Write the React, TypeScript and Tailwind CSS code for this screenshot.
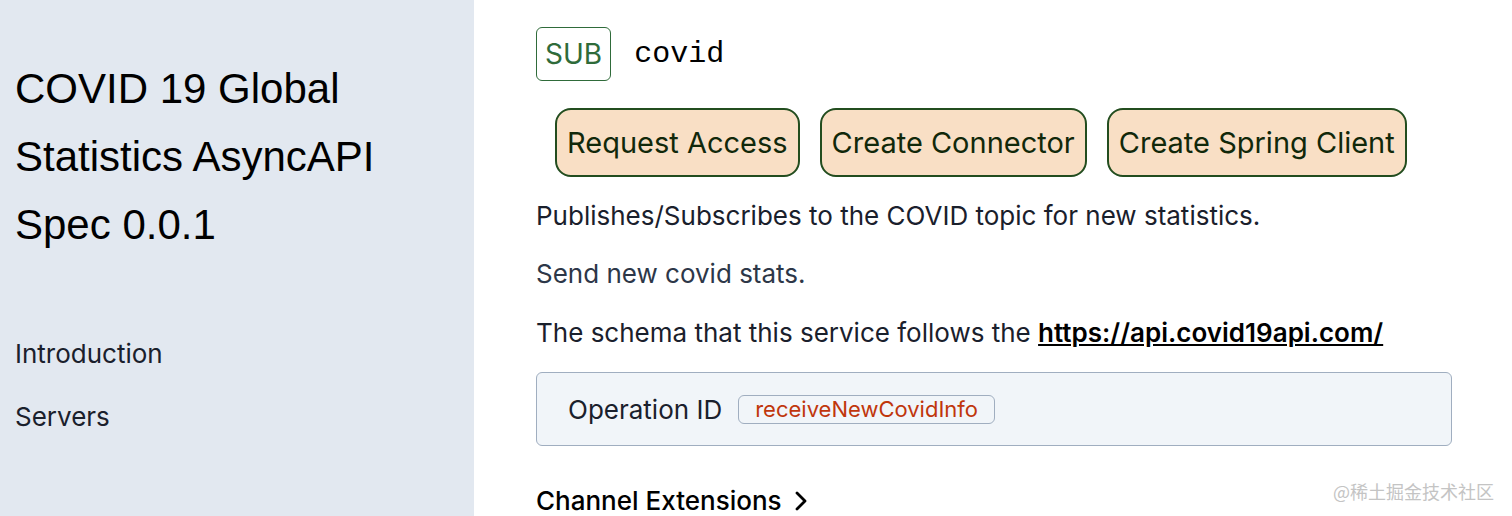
export default function App() {
  const sans = { fontFamily: "Inter, 'Noto Sans', sans-serif" };
  return (
    <div className="flex w-[1512px] h-[516px] overflow-hidden bg-white relative" style={sans}>
      <aside className="w-[474px] shrink-0 bg-[#e2e8f0] pl-[15px] pt-[55px]">
        <h1 className="text-[42px] leading-[68px] text-black" style={{ fontFamily: "'Liberation Sans', Arial, sans-serif" }}>
          COVID 19 Global Statistics AsyncAPI Spec 0.0.1
        </h1>
        <nav className="mt-[80px] space-y-[33px] text-[26px] leading-[30px] text-[#1a202c]">
          <div>Introduction</div>
          <div>Servers</div>
        </nav>
      </aside>

      <main className="flex-1 pl-[62px] pr-[60px] pt-[27px]">
        <div className="flex items-center gap-[23px]">
          <span className="h-[54px] px-[8px] flex items-center border border-[#2f6b3a] rounded-[6px] text-[#2f6b3a] text-[28px]">
            SUB
          </span>
          <span className="text-[30px] text-black" style={{ fontFamily: "'Liberation Mono', monospace" }}>covid</span>
        </div>

        <div className="flex gap-[20px] ml-[19px] mt-[27px]">
          {["Request Access", "Create Connector", "Create Spring Client"].map((label) => (
            <button
              key={label}
              className="h-[69px] px-[10px] rounded-[16px] border-2 border-[#234d1f] bg-[#f9dfc5] text-[#11280a] text-[29px]"
            >
              {label}
            </button>
          ))}
        </div>

        <p className="mt-[22px] text-[26px] leading-[34px] text-[#1a202c]">
          Publishes/Subscribes to the COVID topic for new statistics.
        </p>
        <p className="mt-[24px] text-[26px] leading-[34px] text-[#2d3748]">Send new covid stats.</p>
        <p className="mt-[25px] text-[26px] leading-[34px] text-[#1a202c]">
          The schema that this service follows the{" "}
          <a href="#" className="font-semibold underline text-black">https://api.covid19api.com/</a>
        </p>

        <div className="mt-[22px] h-[74px] border border-[#a0aec0] rounded-[6px] bg-[#f1f5f9] flex items-center pl-[31px] gap-[16px]">
          <span className="text-[26px] text-[#1a202c]">Operation ID</span>
          <span className="h-[29px] px-[16px] flex items-center border border-[#a0aec0] rounded-[6px] text-[22px] text-[#c0360c]">
            receiveNewCovidInfo
          </span>
        </div>

        <div className="mt-[40px] flex items-center gap-[12px] text-[26px] leading-[30px] text-black font-medium">
          Channel Extensions
          <svg width="14" height="20" viewBox="0 0 14 20" fill="none" stroke="black" strokeWidth="2.8" strokeLinecap="round" strokeLinejoin="round">
            <path d="M3 2l8 8-8 8" />
          </svg>
        </div>
      </main>

      <div className="absolute right-[18px] top-[479px] text-[18px] leading-[24px] text-[#c4c4c4]" style={{ fontFamily: "'Noto Sans CJK SC', sans-serif" }}>
        @稀土掘金技术社区
      </div>
    </div>
  );
}
